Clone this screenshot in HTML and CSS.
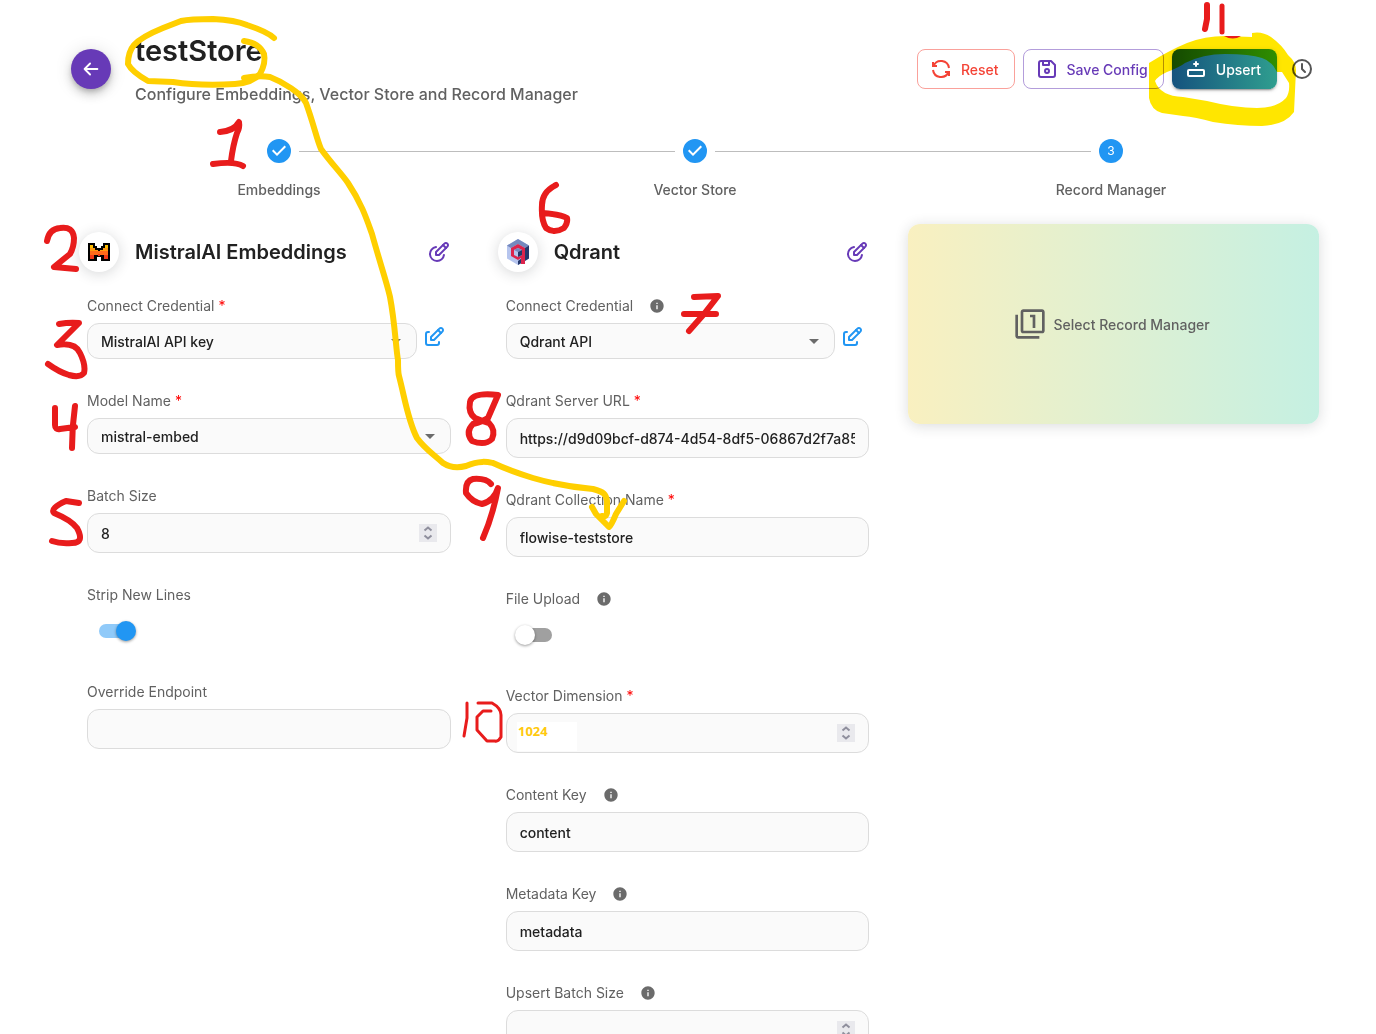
FILE: index.html
```html
<!DOCTYPE html>
<html lang="en">
<head>
<meta charset="utf-8">
<meta name="viewport" content="width=device-width, initial-scale=1">
<title>testStore</title>
<link rel="stylesheet" href="styles.css">
</head>
<body>
<svg class="symbols" aria-hidden="true">
  <symbol id="i-edit-circle" viewBox="0 0 24 24"><path d="M12 15l8.385 -8.415a2.1 2.1 0 0 0 -2.97 -2.97l-8.415 8.385v3h3z"/><path d="M16 5l3 3"/><path d="M9 7.07a7 7 0 0 0 1 13.93a7 7 0 0 0 6.929 -6"/></symbol>
  <symbol id="i-edit" viewBox="0 0 24 24"><path d="M7 7h-1a2 2 0 0 0 -2 2v9a2 2 0 0 0 2 2h9a2 2 0 0 0 2 -2v-1"/><path d="M20.385 6.585a2.1 2.1 0 0 0 -2.97 -2.97l-8.415 8.385v3h3l8.385 -8.415z"/><path d="M16 5l3 3"/></symbol>
  <symbol id="i-info" viewBox="0 0 24 24"><path d="M12 2C6.48 2 2 6.48 2 12s4.48 10 10 10 10-4.48 10-10S17.52 2 12 2zm1 15h-2v-6h2v6zm0-8h-2V7h2v2z"/></symbol>
  <symbol id="i-check" viewBox="0 0 24 24"><path d="M12 0a12 12 0 1 0 0 24 12 12 0 0 0 0-24zm-2 17l-5-5 1.4-1.4 3.6 3.6 7.6-7.6L19 8l-9 9z"/></symbol>
  <symbol id="i-caret" viewBox="0 0 24 24"><path d="M7 10l5 5 5-5z"/></symbol>
  <symbol id="i-spin" viewBox="0 0 18 18"><path d="M5.500 6.500l3.500-3 3.500 3M5.500 11.500l3.500 3 3.500-3"/></symbol>
</svg>

<main class="page">
  <header class="header">
    <button class="back" type="button" aria-label="Back"><svg class="line" viewBox="0 0 24 24"><path d="M5 12h14M5 12l6 6M5 12l6-6"/></svg></button>
    <div class="heading">
      <h1>testStore</h1>
      <p>Configure Embeddings, Vector Store and Record Manager</p>
    </div>
    <div class="actions">
      <button class="btn reset" type="button"><svg class="line" viewBox="0 0 24 24"><path d="M20 11a8.1 8.1 0 0 0 -15.5 -2m-.5 -4v4h4"/><path d="M4 13a8.1 8.1 0 0 0 15.5 2m.5 4v-4h-4"/></svg>Reset</button>
      <button class="btn save" type="button"><svg class="line" viewBox="0 0 24 24"><path d="M6 4h10l4 4v10a2 2 0 0 1 -2 2h-12a2 2 0 0 1 -2 -2v-12a2 2 0 0 1 2 -2"/><circle cx="12" cy="14" r="2"/><path d="M14 4v4h-6v-4"/></svg>Save Config</button>
      <button class="btn upsert" type="button"><svg class="line" viewBox="0 0 24 24"><path d="M4 18v-4a1 1 0 0 1 1 -1h14a1 1 0 0 1 1 1v4a1 1 0 0 1 -1 1h-14a1 1 0 0 1 -1 -1z"/><path d="M12 9v-4M10 7h4"/></svg>Upsert</button>
      <button class="history" type="button" aria-label="Upsert history"><svg class="line" viewBox="0 0 24 24"><circle cx="12" cy="12" r="9"/><path d="M12 7v5l3 3"/></svg></button>
    </div>
  </header>

  <ol class="stepper">
    <li><svg class="step-dot" viewBox="0 0 24 24"><use href="#i-check"/></svg><span>Embeddings</span></li>
    <li><svg class="step-dot" viewBox="0 0 24 24"><use href="#i-check"/></svg><span>Vector Store</span></li>
    <li><b class="step-dot number">3</b><span>Record Manager</span></li>
  </ol>

  <div class="columns">
    <section class="panel">
      <div class="panel-head">
        <span class="avatar"><svg viewBox="0 0 24 24"><path d="M1 3h7v3h2v2h4V6h2V3h7v18h-9v-4h-4v4H1z" fill="#000"/><path d="M3 5h3v4H3zM18 5h3v4h-3z" fill="#ffc000"/><path d="M3 8h5v2h3v1h2v-1h3V8h5v3H3z" fill="#ff9a10"/><path d="M3 11h18v4H3z" fill="#ff6b1a"/><path d="M3 15h4v4H3zM17 15h4v4h-4zM11 14h2v2h-2z" fill="#f03a18"/></svg></span>
        <h2>MistralAI Embeddings</h2>
        <button class="icon-btn purple" type="button" aria-label="Change embeddings"><svg class="line"><use href="#i-edit-circle"/></svg></button>
      </div>
      <div class="fields">
        <div class="field">
          <div class="label"><label for="m-cred">Connect Credential <i>*</i></label></div>
          <div class="with-edit">
            <div class="select"><select id="m-cred"><option>MistralAI API key</option></select><svg><use href="#i-caret"/></svg></div>
            <button class="icon-btn blue" type="button" aria-label="Edit credential"><svg class="line"><use href="#i-edit"/></svg></button>
          </div>
        </div>
        <div class="field">
          <div class="label"><label for="model">Model Name <i>*</i></label></div>
          <div class="select"><select id="model"><option>mistral-embed</option></select><svg><use href="#i-caret"/></svg></div>
        </div>
        <div class="field">
          <div class="label"><label for="batch">Batch Size</label></div>
          <div class="input"><input id="batch" type="number" value="8"><svg class="spin"><use href="#i-spin"/></svg></div>
        </div>
        <div class="field">
          <div class="label"><label for="strip">Strip New Lines</label></div>
          <div class="switch"><input id="strip" type="checkbox" role="switch" checked></div>
        </div>
        <div class="field">
          <div class="label"><label for="endpoint">Override Endpoint</label></div>
          <div class="input"><input id="endpoint" type="text"></div>
        </div>
      </div>
    </section>

    <section class="panel">
      <div class="panel-head">
        <span class="avatar"><svg viewBox="0 0 24 26"><path d="M12 0l11 6.500v13L12 26 1 19.500v-13z" fill="#b6c5ee"/><path d="M12 0l11 6.500-4 2.500-7-4-7 4-4-2.500z" fill="#7589be"/><path d="M23 6.500v13l-4 2.500V9z" fill="#24386c"/><path d="M12 22v4l4-2.300V19z" fill="#24386c"/><path d="M12 5l7 4v16h-4v-6l-3 2-7-4V9z" fill="#dc244c"/><path d="M12 9l4 2v5l-4 2-4-2v-5z" fill="#b6c5ee"/><path d="M8 11l4-2 4 2-4 2z" fill="#7589be"/><path d="M12 13l4-2v5l-4 2z" fill="#24386c"/></svg></span>
        <h2>Qdrant</h2>
        <button class="icon-btn purple" type="button" aria-label="Change vector store"><svg class="line"><use href="#i-edit-circle"/></svg></button>
      </div>
      <div class="fields">
        <div class="field">
          <div class="label"><label for="q-cred">Connect Credential</label><svg class="info"><use href="#i-info"/></svg></div>
          <div class="with-edit">
            <div class="select"><select id="q-cred"><option>Qdrant API</option></select><svg><use href="#i-caret"/></svg></div>
            <button class="icon-btn blue" type="button" aria-label="Edit credential"><svg class="line"><use href="#i-edit"/></svg></button>
          </div>
        </div>
        <div class="field">
          <div class="label"><label for="url">Qdrant Server URL <i>*</i></label></div>
          <div class="input"><input id="url" type="text" value="https://d9d09bcf-d874-4d54-8df5-06867d2f7a85"></div>
        </div>
        <div class="field">
          <div class="label"><label for="coll">Qdrant Collection Name <i>*</i></label></div>
          <div class="input"><input id="coll" type="text" value="flowise-teststore"></div>
        </div>
        <div class="field">
          <div class="label"><label for="upload">File Upload</label><svg class="info"><use href="#i-info"/></svg></div>
          <div class="switch"><input id="upload" type="checkbox" role="switch"></div>
        </div>
        <div class="field">
          <div class="label"><label for="dim">Vector Dimension <i>*</i></label></div>
          <div class="input"><input id="dim" type="number"><svg class="spin"><use href="#i-spin"/></svg></div>
        </div>
        <div class="field">
          <div class="label"><label for="ckey">Content Key</label><svg class="info"><use href="#i-info"/></svg></div>
          <div class="input"><input id="ckey" type="text" value="content"></div>
        </div>
        <div class="field">
          <div class="label"><label for="mkey">Metadata Key</label><svg class="info"><use href="#i-info"/></svg></div>
          <div class="input"><input id="mkey" type="text" value="metadata"></div>
        </div>
        <div class="field">
          <div class="label"><label for="ubatch">Upsert Batch Size</label><svg class="info"><use href="#i-info"/></svg></div>
          <div class="input"><input id="ubatch" type="number"><svg class="spin"><use href="#i-spin"/></svg></div>
        </div>
      </div>
    </section>

    <button class="record-card" type="button">
      <svg viewBox="0 0 24 24"><path d="M3 5H1v16c0 1.100.9 2 2 2h16v-2H3V5zm11 10h2V5h-4v2h2v8zm7-14H7c-1.100 0-2 .9-2 2v14c0 1.100.9 2 2 2h14c1.100 0 2-.9 2-2V3c0-1.100-.9-2-2-2zm0 16H7V3h14v14z"/></svg>
      Select Record Manager
    </button>
  </div>
</main>

<!-- Highlighter ring round the Upsert button -->
<svg class="ink marker" viewBox="0 0 1376 1034" aria-hidden="true">
  <path fill-rule="evenodd" d="M1149 63Q1170 50 1187 43Q1205 36 1225 36L1252 37V33Q1262 31 1271 37Q1282 45 1288 55Q1296 62 1296 70L1294 112Q1285 125 1262 126Q1238 126 1213 122Q1195 117 1183 116L1162 113Q1151 110 1149 98ZM1155 81Q1158 76 1167 72Q1180 67 1185 63Q1203 54 1225 54Q1250 54 1262 58Q1272 61 1277 72H1282L1289 83Q1290 92 1286 98Q1277 108 1257 108Q1235 108 1207 101L1183 97Q1160 96 1155 81Z"/>
</svg>
<!-- Pen notes: yellow pointer from the store name, red step numbers -->
<svg class="ink" viewBox="0 0 1376 1034" aria-hidden="true">
  <g class="yellow">
    <path d="M274 38Q268 32 247 25Q235 20 213 19Q190 19 181 21L163 28Q141 37 134 45Q128 52 128 64Q132 72 148 81L173 82Q200 86 235 84Q252 83 260 74Q266 63 264 54Q259 43 244 41"/>
    <path d="M244 78C255 76 263 76 270 77C283 82 301 93 306 103C313 122 317 140 321 149C331 163 341 173 348 183C362 204 367 220 372 234C380 263 387 283 390 297C395 323 396 350 398 360C398 367 398 373 399 376C405 399 408 421 417 438C425 449 432 453 443 463C452 469 462 467 466 466C480 460 488 462 493 463C506 469 520 474 533 478C550 483 570 487 593 489C604 492 606 494 607 501V513Q606 517 602 516"/>
    <path d="M592 507L596 514L609 527Q611 526 616 514L624 501"/>
  </g>
  <g class="red">
    <path d="M220 132Q234 131 239 122Q240 128 237 133Q233 145 231 161M213 164Q235 161 243 166"/>
    <path d="M47 241Q49 229 60 228Q73 226 74 238Q74 247 70 254L54 267L76 269"/>
    <path d="M59 324Q70 322 79 323L57 345Q75 342 80 353Q86 365 84 373Q80 378 69 375Q59 372 48 364"/>
    <path d="M55 408V425Q55 430 60 429L75 427M75 406Q72 427 72 448"/>
    <path d="M79 503L66 501Q50 508 54 513Q71 520 77 528Q85 543 72 543Q60 544 52 541"/>
    <path d="M556 185Q542 192 542 205Q541 220 546 228Q554 234 564 228Q568 223 567 218Q560 214 542 213"/>
    <path d="M694 297L718 296L704 314L689 331M684 314H716"/>
    <path d="M498 395Q472 392 470 402Q468 413 475 418Q482 421 489 423Q496 430 492 439Q485 446 472 441Q465 432 473 424Q484 421 488 418Z"/>
    <path d="M491 484Q486 478 473 479Q465 481 466 493Q472 502 482 504Q494 501 498 488Q493 515 483 538"/>
    <path class="thin" d="M467 703V718L464 736M478 703L492 703Q501 708 501 715V737Q498 742 495 741H487L477 730V717L483 711H491"/>
    <path d="M1207 5V19L1205 29"/><path class="mid" d="M1222 6V32"/>
    <path class="dab" d="M1224 36H1241Q1233 41 1224 36Z"/>
  </g>
  <rect class="patch" x="517" y="722" width="60" height="29"/>
  <text class="value" x="518" y="736">1024</text>
</svg>
</body>
</html>
```
FILE: styles.css
```css
* { box-sizing: border-box; }
body { margin: 0; background: #fff; color: #212121; font-family: Inter, "Liberation Sans", sans-serif; font-size: 14px; }
button, input, select { font: inherit; color: inherit; }
button { border: 0; background: none; padding: 0; cursor: pointer; }
h1, h2, p, ol { margin: 0; padding: 0; }
svg { display: block; width: 24px; height: 24px; flex: none; fill: currentColor; }
.line { fill: none; stroke: currentColor; stroke-width: 2; stroke-linecap: round; stroke-linejoin: round; }
.symbols { position: absolute; width: 0; height: 0; }

.page { height: 100vh; overflow-y: auto; scrollbar-width: none; padding: 32px 57px 0 71px; }

.header { display: flex; align-items: center; height: 74px; gap: 24px; }
.back { display: grid; place-items: center; width: 40px; height: 40px; border-radius: 50%; background: #673ab7; color: #fff; box-shadow: 0 3px 5px -1px rgba(0,0,0,.2), 0 6px 10px rgba(0,0,0,.14), 0 1px 18px rgba(0,0,0,.12); }
.back svg { width: 22px; height: 22px; }
.heading { flex: 1; display: flex; flex-direction: column; gap: 12px; }
.heading h1 { font-size: 29px; line-height: 38px; font-weight: 600; }
.heading p { font-size: 16px; line-height: 24px; font-weight: 500; color: #616161; }
.actions { display: flex; gap: 8px; align-items: center; }
.btn { display: flex; align-items: center; gap: 8px; height: 40px; padding: 0 16px 0 12px; border-radius: 8px; font-weight: 500; white-space: nowrap; }
.reset { padding: 0 15px 0 11px; border: 1px solid #faa19b; color: #f44336; }
.reset .line { stroke-linecap: butt; stroke-linejoin: miter; }
.save { padding: 0 15px 0 11px; border: 1px solid #b39ddb; color: #673ab7; }
.upsert { color: #fff; background: linear-gradient(90deg, #15527e, #2f9e8f); box-shadow: 0 3px 1px -2px rgba(0,0,0,.2), 0 2px 2px rgba(0,0,0,.14), 0 1px 5px rgba(0,0,0,.12); }
.history { display: grid; place-items: center; width: 34px; height: 34px; color: #555; }

.stepper { display: flex; list-style: none; padding-top: 33px; }
.stepper li { position: relative; flex: 1; display: flex; flex-direction: column; align-items: center; gap: 17px; font-weight: 500; line-height: 20px; color: #616161; }
.stepper li + li::before { content: ""; position: absolute; top: 12px; left: calc(-50% + 20px); right: calc(50% + 20px); border-top: 1px solid #bdbdbd; }
.step-dot { color: #2196f3; }
.number { display: grid; place-items: center; width: 24px; height: 24px; border-radius: 50%; background: #2196f3; color: #fff; font-size: 12px; font-weight: 400; }

.columns { display: grid; grid-template-columns: repeat(3, minmax(0, 1fr)); gap: 8px; padding-top: 24px; align-items: start; }
.panel { padding: 8px 31px 32px 8px; }
.panel-head { display: flex; align-items: center; gap: 16px; height: 40px; }
.panel-head h2 { flex: 1; font-size: 20px; line-height: 28px; font-weight: 600; }
.avatar { display: grid; place-items: center; width: 40px; height: 40px; border-radius: 50%; background: #fff; box-shadow: 0 2px 14px rgba(32,40,45,.18); }
.avatar svg { height: 26px; }
.purple { color: #673ab7; }
.blue { color: #2196f3; }

.fields { display: flex; flex-direction: column; gap: 32px; padding: 24px 0 0 8px; }
.field { display: flex; flex-direction: column; gap: 7px; }
.label { display: flex; align-items: center; gap: 16px; height: 20px; line-height: 20px; color: #616161; }
.label i { color: #f00; font-style: normal; }
.info { width: 16px; height: 16px; color: #6b6b6b; }
.with-edit { display: flex; gap: 5px; padding-right: 5px; }
.with-edit .select { flex: 1; }
.with-edit .icon-btn { align-self: flex-start; margin-top: 2px; }
.select, .input { display: flex; align-items: center; height: 40px; padding-right: 13px; border: 1px solid #dcdcdc; border-radius: 12px; background: #fafafa; font-weight: 500; color: #212121; }
.select { height: 36px; padding-right: 8px; }
.select svg { color: #6b6b6b; }
.select select, .input input { flex: 1; min-width: 0; height: 100%; padding: 0 0 0 13px; border: 0; outline: 0; background: none; appearance: none; }
.input input[type="number"] { appearance: textfield; }
.input input::-webkit-inner-spin-button { display: none; }
.input input[type="text"] { padding: 0; margin-left: 13px; }
.spin { width: 18px; height: 18px; background: #e9e9ed; fill: none; stroke: #8f8f9d; stroke-width: 2; }
.switch { display: flex; align-items: center; height: 38px; padding-left: 12px; }
.switch input { position: relative; appearance: none; width: 34px; height: 14px; margin: 0; border-radius: 7px; background: #a0a0a0; }
.switch input::before { content: ""; position: absolute; top: -3px; left: -3px; width: 20px; height: 20px; border-radius: 50%; background: #fff; box-shadow: 0 1px 3px rgba(0,0,0,.4); }
.switch input:checked { background: #90caf9; }
.switch input:checked::before { left: 17px; background: #2196f3; }

.record-card { display: flex; align-items: center; justify-content: center; gap: 8px; height: 200px; padding-right: 4px; border-radius: 12px; font-weight: 500; color: #616161; background: linear-gradient(90deg, #f9f0c0, #e2f0d0 45%, #c5f0e2); box-shadow: 0 2px 14px rgba(32,40,45,.16); }
.record-card svg { width: 32px; height: 32px; }

.ink { position: absolute; top: 0; left: 0; width: 1376px; height: 1034px; pointer-events: none; fill: none; stroke-linecap: round; stroke-linejoin: round; }
.marker { fill: #ffe600; mix-blend-mode: multiply; }
.yellow { stroke: #ffcf00; stroke-width: 6; }
.red { stroke: #e81c1c; stroke-width: 6; }
.thin { stroke-width: 3; }
.mid { stroke-width: 5; }
.dab { fill: #e81c1c; stroke: none; }
.patch { fill: #fff; }
.value { fill: #ffc90e; font: 700 13px "Open Sans", sans-serif; }
```
